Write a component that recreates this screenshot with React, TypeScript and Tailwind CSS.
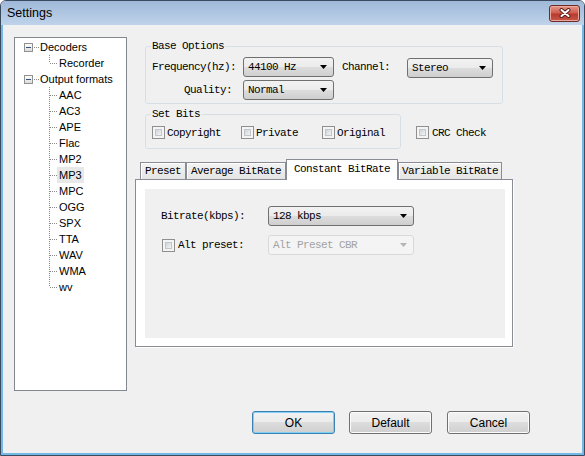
import React from 'react';

// SimSun-like bitmap text: 6px advance per character
const sim = "font-['Liberation_Mono',monospace] text-[11px] tracking-[-0.6px] leading-[12px] text-black whitespace-pre";
const ui = "font-['Liberation_Sans',Arial,sans-serif]";

function Check() {
  return (
    <span className="inline-block w-[13px] h-[13px] shrink-0 border border-[#8f8f8f] bg-[#f4f4f4] p-[2px]">
      <span className="block w-full h-full border border-[#c2c6cc] bg-[linear-gradient(135deg,#cfd3d8,#f4f4f4)]" />
    </span>
  );
}

function Arrow({ color }: { color: string }) {
  return (
    <svg width="7" height="4" viewBox="0 0 7 4" className="shrink-0">
      <polygon points="0,0 7,0 3.5,4" fill={color} />
    </svg>
  );
}

function Combo({ text, width, disabled }: { text: string; width: string; disabled?: boolean }) {
  const look = disabled
    ? 'border-[#d9d9d9] bg-[#f4f4f4] text-[#a3a3a3]'
    : 'border-[#707070] bg-[linear-gradient(#f2f2f2,#ebebeb_50%,#dddddd_50%,#cfcfcf)] text-black';
  return (
    <div className={'flex h-[20px] items-center justify-between rounded-[3px] border pl-[4px] pr-[6px] ' + look + ' ' + width}>
      <span className={sim + (disabled ? ' !text-[#a3a3a3]' : '')}>{text}</span>
      <Arrow color={disabled ? '#b5b5b5' : '#000'} />
    </div>
  );
}

function Expander() {
  return (
    <span className="flex h-[9px] w-[9px] shrink-0 items-center justify-center border border-[#919191] bg-[linear-gradient(#ffffff,#dcdcdc)]">
      <span className="block h-[1px] w-[5px] bg-[#3a5378]" />
    </span>
  );
}

function RootNode({ label }: { label: string }) {
  return (
    <div className="flex h-[16px] items-center pl-[9px]">
      <Expander />
      <svg width="6" height="16" className="shrink-0">
        <line x1="1" y1="8.5" x2="6" y2="8.5" stroke="#8a8a8a" strokeDasharray="1 1" />
      </svg>
      <span className={ui + ' px-[1px] text-[11px] leading-[15px] text-black'}>{label}</span>
    </div>
  );
}

function ChildNode({ label, last, selected }: { label: string; last?: boolean; selected?: boolean }) {
  return (
    <div className="flex h-[16px] items-center pl-[34px]">
      <svg width="8" height="16" className="shrink-0">
        <line x1="0.5" y1="0" x2="0.5" y2={last ? 8 : 16} stroke="#8a8a8a" strokeDasharray="1 1" />
        <line x1="1" y1="8.5" x2="8" y2="8.5" stroke="#8a8a8a" strokeDasharray="1 1" />
      </svg>
      <span
        className={
          ui + ' px-[2px] text-[11px] leading-[16px] text-black ' + (selected ? 'bg-[#e8e8e8]' : '')
        }
      >
        {label}
      </span>
    </div>
  );
}

function Tab({ label, width, active }: { label: string; width: string; active?: boolean }) {
  if (active) {
    return (
      <div
        className={
          'relative z-10 -mb-[1px] flex h-[21px] items-start justify-center border border-b-0 border-[#898c95] bg-white pt-[3px] ' +
          width
        }
      >
        <span className={sim}>{label}</span>
      </div>
    );
  }
  return (
    <div
      className={
        'flex h-[17px] items-center justify-center border border-b-0 border-[#898c95] bg-[linear-gradient(#f3f3f3,#e4e4e4)] shadow-[inset_1px_1px_0_#ffffff] ' +
        width
      }
    >
      <span className={sim}>{label}</span>
    </div>
  );
}

function Button({ label, focused }: { label: string; focused?: boolean }) {
  return (
    <button
      className={
        ui +
        ' flex h-[23px] w-[83px] items-center justify-center rounded-[3px] border text-[12px] text-black ' +
        (focused
          ? 'border-[#3c7fb1] bg-[linear-gradient(#f2f2f2,#ebebeb_50%,#dddddd_50%,#cfcfcf)] shadow-[inset_0_0_0_1px_#7fd0f5]'
          : 'border-[#707070] bg-[linear-gradient(#f2f2f2,#ebebeb_50%,#dddddd_50%,#cfcfcf)] shadow-[inset_0_0_0_1px_#fbfbfb]')
      }
    >
      {label}
    </button>
  );
}

export default function App() {
  const formats = ['AAC', 'AC3', 'APE', 'Flac', 'MP2', 'MP3', 'MPC', 'OGG', 'SPX', 'TTA', 'WAV', 'WMA', 'wv'];

  return (
    <div className="flex h-[456px] w-[585px] flex-col overflow-hidden rounded-t-[6px] border border-[#3b4b5f] bg-[#f0f0f0]">
      {/* title bar */}
      <div className="flex h-[24px] shrink-0 items-center justify-between bg-[linear-gradient(#9fb9d9,#bfd3ea)] pl-[6px] pr-[4px]">
        <span className={ui + ' text-[12.5px] text-black'}>Settings</span>
        <div className="flex h-[17px] w-[31px] items-center justify-center rounded-[3px] border border-[#6e2a24] bg-[linear-gradient(#e49a8c,#cf5d4f_45%,#b9392d_55%,#c4584b)] shadow-[inset_0_0_0_1px_#eba89c]">
          <svg width="14" height="10" viewBox="0 0 14 10">
            <path d="M3.5 2 L10.5 8 M10.5 2 L3.5 8" stroke="#5a1f1a" strokeWidth="4" strokeLinecap="round" />
            <path d="M3.5 2 L10.5 8 M10.5 2 L3.5 8" stroke="#ffffff" strokeWidth="2" strokeLinecap="round" />
          </svg>
        </div>
      </div>

      {/* client */}
      <div className="flex flex-1 flex-col border-x-2 border-b-2 border-[#74b9e6] bg-[#f0f0f0]">
        <div className="flex">
          {/* tree */}
          <div className="ml-[11px] mt-[12px] h-[354px] w-[113px] shrink-0 border border-[#828790] bg-white pt-[1px]">
            <RootNode label="Decoders" />
            <ChildNode label="Recorder" last />
            <RootNode label="Output formats" />
            {formats.map((f, i) => (
              <ChildNode key={f} label={f} last={i === formats.length - 1} selected={f === 'MP3'} />
            ))}
          </div>

          {/* right side */}
          <div className="ml-[8px] mt-[15px] flex flex-col">
            <fieldset className="ml-[10px] h-[64px] w-[358px] rounded-[3px] border border-[#d5dfe5]">
              <legend className={sim + ' ml-[5px] px-[1px]'}>Base Options</legend>
              <div className="mt-[4px] flex items-center pl-[6px]">
                <span className={sim + ' w-[91px]'}>Frequency(hz):</span>
                <Combo text="44100 Hz" width="w-[91px]" />
                <span className={sim + ' ml-[8px] w-[65px]'}>Channel:</span>
                <div className="mt-[2px]">
                  <Combo text="Stereo" width="w-[86px]" />
                </div>
              </div>
              <div className="mt-[2px] flex items-center pl-[6px]">
                <span className={sim + ' w-[91px] pr-[11px] text-right'}>Quality:</span>
                <Combo text="Normal" width="w-[91px]" />
              </div>
            </fieldset>

            <div className="mt-[4px] flex items-start">
              <fieldset className="ml-[10px] h-[41px] w-[256px] rounded-[3px] border border-[#d5dfe5]">
                <legend className={sim + ' ml-[5px] px-[1px]'}>Set Bits</legend>
                <div className="mt-[6px] flex items-center pl-[6px]">
                  <label className="flex w-[89px] items-center gap-[2px]">
                    <Check />
                    <span className={sim}>Copyright</span>
                  </label>
                  <label className="flex w-[81px] items-center gap-[2px]">
                    <Check />
                    <span className={sim}>Private</span>
                  </label>
                  <label className="flex items-center gap-[2px]">
                    <Check />
                    <span className={sim}>Original</span>
                  </label>
                </div>
              </fieldset>
              <label className="ml-[15px] mt-[18px] flex items-center gap-[3px]">
                <Check />
                <span className={sim}>CRC Check</span>
              </label>
            </div>

            {/* tabs */}
            <div className="mt-[10px] flex h-[20px] items-end pl-[5px]">
              <Tab label="Preset" width="w-[46px]" />
              <Tab label="Average BitRate" width="w-[100px]" />
              <Tab label="Constant BitRate" width="w-[112px]" active />
              <Tab label="Variable BitRate" width="w-[104px]" />
            </div>
            <div className="h-[168px] w-[378px] border border-[#898c95] bg-white pb-[8px] pl-[9px] pr-[7px] pt-[9px] shadow-[1px_1px_0_#ffffff]">
              <div className="h-full w-full bg-[#f0f0f0] pl-[16px] pt-[17px]">
                <div className="flex items-center">
                  <span className={sim + ' w-[107px]'}>Bitrate(kbps):</span>
                  <Combo text="128 kbps" width="w-[146px]" />
                </div>
                <div className="mt-[9px] flex items-center">
                  <label className="flex w-[107px] items-center gap-[3px] pl-[1px]">
                    <Check />
                    <span className={sim}>Alt preset:</span>
                  </label>
                  <Combo text="Alt Preset CBR" width="w-[146px]" disabled />
                </div>
              </div>
            </div>
          </div>
        </div>

        {/* buttons */}
        <div className="ml-[249px] mt-[20px] flex gap-[14px]">
          <Button label="OK" focused />
          <Button label="Default" />
          <div className="ml-[1px]">
            <Button label="Cancel" />
          </div>
        </div>
      </div>
    </div>
  );
}
